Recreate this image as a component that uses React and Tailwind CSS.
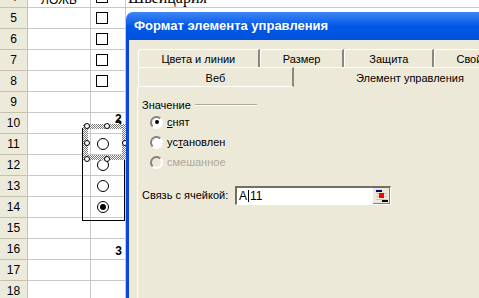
import React from "react";

const rows = [4, 5, 6, 7, 8, 9, 10, 11, 12, 13, 14, 15, 16, 17, 18];

const Check = () => (
  <span className="block w-[12px] h-[12px] border border-black bg-white" />
);

const SheetRadio = ({ on }) => (
  <span className="flex items-center justify-center w-[12px] h-[12px] rounded-full border border-black bg-white">
    {on && <span className="w-[6px] h-[6px] rounded-full bg-black" />}
  </span>
);

const DlgRadio = ({ on, off }) => (
  <span
    className={
      "flex items-center justify-center w-[13px] h-[13px] rounded-full border-2 border-t-[#808080] border-l-[#808080] border-b-white border-r-white " +
      (off ? "bg-[#ECE9D8]" : "bg-white")
    }
  >
    {on && <span className="w-[4px] h-[4px] rounded-full bg-black" />}
  </span>
);

// cell in column C for each row
const colC = (r) => {
  if (r >= 4 && r <= 8) return <div className="pl-[5px] flex items-center h-full"><Check /></div>;
  if (r >= 11 && r <= 14) return <div className="pl-[6px] flex items-center h-full"><SheetRadio on={r === 14} /></div>;
  if (r === 10 || r === 16)
    return (
      <div className="flex items-end justify-end h-full pr-[3px] pb-[2px] font-bold text-[12px] leading-[12px]">
        {r === 10 ? "2" : "3"}
      </div>
    );
  return null;
};

const Band = ({ className }) => (
  <div
    className={
      "absolute bg-[image:repeating-conic-gradient(#7a7a7a_0%_25%,#ffffff_0%_50%)] bg-[length:2px_2px] " + className
    }
  />
);

const Handle = ({ className }) => (
  <div className={"absolute w-[6px] h-[6px] rounded-full border border-black bg-white " + className} />
);

const Tab = ({ w, children, last }) => (
  <div
    className={
      "flex items-start justify-center pt-[3px] rounded-tl-[3px] border-t border-l border-white " +
      (last ? "" : "border-r-2 border-r-[#8A8878] ") +
      w
    }
  >
    {children}
  </div>
);

const RefIcon = () => (
  <svg width="17" height="16" viewBox="0 0 17 16">
    <rect x="0" y="0" width="17" height="16" fill="#ECE9D8" />
    <rect x="0" y="15" width="17" height="1" fill="#808080" />
    <rect x="16" y="0" width="1" height="16" fill="#808080" />
    <rect x="3" y="2" width="6" height="2" fill="#000080" />
    <rect x="3" y="5" width="11" height="1" fill="#C8C8C8" />
    <rect x="3" y="8" width="11" height="1" fill="#C8C8C8" />
    <rect x="3" y="11" width="11" height="1" fill="#C8C8C8" />
    <rect x="6" y="5" width="5" height="5" fill="#FF0000" />
    <rect x="9" y="12" width="6" height="2" fill="#000000" />
  </svg>
);

export default function App() {
  return (
    <div className="relative w-[479px] h-[298px] overflow-hidden bg-white font-['Liberation_Sans',Arial,sans-serif] text-black">
      {/* spreadsheet */}
      <div className="flex flex-col mt-[-13px]">
        {rows.map((r) => (
          <div key={r} className="flex h-[21px] shrink-0">
            <div className="w-[28px] shrink-0 flex items-center justify-center bg-[#EBEADB] border-r border-b border-[#C5C2B2] text-[12px] leading-[12px]">
              {r}
            </div>
            <div className="w-[63px] shrink-0 border-r border-b border-[#C8C8C8] flex items-end justify-center pb-[1px] text-[12px] leading-[12px]">
              {r === 4 ? "ЛОЖЬ" : ""}
            </div>
            <div className="w-[35px] shrink-0 border-r border-b border-[#C8C8C8]">{colC(r)}</div>
            <div className="flex-1 border-b border-[#C8C8C8] flex items-end pl-[2px] pb-[1px] font-['Liberation_Serif','Times_New_Roman',serif] text-[16px] leading-[16px]">
              {r === 4 ? "Швейцария" : ""}
            </div>
          </div>
        ))}
      </div>

      {/* option group frame and selection */}
      <div className="absolute left-[82px] top-[128px] w-[43px] h-[93px] border border-black" />
      <Band className="left-[83px] top-[124px] w-[44px] h-[5px]" />
      <Band className="left-[83px] top-[155px] w-[44px] h-[5px]" />
      <Band className="left-[83px] top-[124px] w-[5px] h-[36px]" />
      <Band className="left-[122px] top-[124px] w-[5px] h-[36px]" />
      <div className="absolute left-[115px] top-[113px] text-[12px] leading-[12px] font-bold">2</div>
      <Handle className="left-[84px] top-[123px]" />
      <Handle className="left-[104px] top-[123px]" />
      <Handle className="left-[84px] top-[140px]" />
      <Handle className="left-[84px] top-[156px]" />
      <Handle className="left-[104px] top-[156px]" />
      <Handle className="left-[122px] top-[140px]" />

      {/* dialog */}
      <div className="absolute left-[126px] top-[12px] w-[400px] h-[300px] flex flex-col rounded-tl-[7px] overflow-hidden">
        <div className="h-[28px] shrink-0 flex items-center pl-[8px] bg-gradient-to-b from-[#3D86F5] via-[#0058E8] to-[#0050DC] text-white font-bold text-[13px]">
          Формат элемента управления
        </div>
        <div className="flex-1 flex flex-col border-l-[3px] border-[#0A46D8] bg-[#ECE9D8] pt-[9px] pl-[8px] text-[11px] leading-[13px]">
          <div className="flex h-[18px] ml-[1px] shrink-0">
            <Tab w="w-[122px]">Цвета и линии</Tab>
            <Tab w="w-[85px]">Размер</Tab>
            <Tab w="w-[90px]">Защита</Tab>
            <Tab w="w-[92px]" last>Свойства</Tab>
          </div>
          <div className="flex h-[20px] ml-[1px] shrink-0">
            <div className="w-[159px] flex items-start justify-center pt-[4px] border-t border-l border-b border-white border-r-2 border-r-[#8A8878]">
              Веб
            </div>
            <div className="w-[237px] flex items-start justify-center pt-[4px] border-t border-white">
              Элемент управления
            </div>
          </div>
          <div className="flex-1 flex flex-col border-l border-white">
            <div className="flex items-center h-[12px] mt-[12px] pl-[4px]">
              <span>Значение</span>
              <span className="ml-[4px] w-[62px] border-t border-[#ACA899] border-b border-b-white h-0" />
            </div>
            <div className="flex items-center h-[20px] mt-[1px] pl-[12px]">
              <DlgRadio on />
              <span className="ml-[4px]"><span className="underline">с</span>нят</span>
            </div>
            <div className="flex items-center h-[20px] pl-[12px]">
              <DlgRadio />
              <span className="ml-[4px]">ус<span className="underline">т</span>ановлен</span>
            </div>
            <div className="flex items-center h-[20px] pl-[12px]">
              <DlgRadio off />
              <span className="ml-[4px] text-[#ACA899]">смешанное</span>
            </div>
            <div className="flex items-center h-[19px] mt-[14px] pl-[4px]">
              <span className="w-[93px] shrink-0">Связь с ячейкой:</span>
              <div className="w-[156px] h-[19px] flex items-center bg-white border-t-2 border-l-2 border-t-[#716F64] border-l-[#716F64] border-b border-r border-b-white border-r-white">
                <span className="flex-1 pl-[2px] text-[12px] leading-[12px] flex items-center">
                  A<span className="w-[1px] h-[12px] bg-black mx-[1px]" />11
                </span>
                <RefIcon />
              </div>
            </div>
          </div>
        </div>
      </div>
    </div>
  );
}
